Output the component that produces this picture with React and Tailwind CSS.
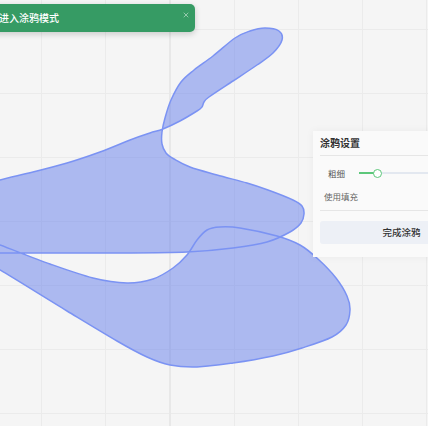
import { X } from 'lucide-react'

const SHAPE_A = [
  [-20, 186], [0, 180], [33, 172], [67, 163], [100, 152], [130, 140], [150, 133], [163, 129],
  [180, 121], [197, 111], [202, 107], [204, 102], [209, 97], [233, 81], [257, 65], [273, 53],
  [282, 40], [279, 31], [265, 28], [250, 31], [235, 38], [213, 56], [194, 70], [181, 82],
  [171, 100], [165, 118], [162, 132], [162, 144], [166, 153], [174, 159], [190, 167], [217, 175],
  [247, 183], [268, 190], [293, 200], [302, 206], [304, 214], [301, 223], [290, 232], [267, 242],
  [233, 248], [187, 252], [120, 253], [0, 253], [-20, 253],
]

const SHAPE_B = [
  [-20, 238], [0, 245], [50, 264], [93, 278], [127, 283], [153, 279], [173, 268], [187, 255],
  [197, 240], [207, 230], [220, 227], [240, 228], [277, 236], [300, 245], [318, 259], [336, 278],
  [347, 296], [350, 310], [346, 325], [332, 337], [302, 348], [273, 356], [233, 363], [197, 367],
  [170, 365], [147, 357], [117, 341], [67, 311], [0, 270], [-20, 260],
]

// catmull-rom through the points, closed
function smooth(pts) {
  const n = pts.length
  const p = (i) => pts[(i + n) % n]
  let d = `M${pts[0][0]},${pts[0][1]}`
  for (let i = 0; i < n; i++) {
    const p0 = p(i - 1), p1 = p(i), p2 = p(i + 1), p3 = p(i + 2)
    const c1 = [p1[0] + (p2[0] - p0[0]) / 6, p1[1] + (p2[1] - p0[1]) / 6]
    const c2 = [p2[0] - (p3[0] - p1[0]) / 6, p2[1] - (p3[1] - p1[1]) / 6]
    d += ` C${c1[0].toFixed(1)},${c1[1].toFixed(1)} ${c2[0].toFixed(1)},${c2[1].toFixed(1)} ${p2[0]},${p2[1]}`
  }
  return d + ' Z'
}

const V_LINES = [41, 105, 234, 298, 362, 426]
const H_LINES = [29, 93, 157, 221, 285, 349, 413]

function Canvas() {
  return (
    <svg width="428" height="426" viewBox="0 0 428 426" className="block">
      <rect width="428" height="426" fill="#f5f5f5" />
      {V_LINES.map((x) => (
        <line key={'v' + x} x1={x + 0.5} y1="0" x2={x + 0.5} y2="426" stroke="#ebebeb" />
      ))}
      {H_LINES.map((y) => (
        <line key={'h' + y} x1="0" y1={y + 0.5} x2="428" y2={y + 0.5} stroke="#ebebeb" />
      ))}
      <line x1="170" y1="0" x2="170" y2="426" stroke="#e8e8e8" strokeWidth="2" />
      <path
        d={smooth(SHAPE_A) + ' ' + smooth(SHAPE_B)}
        fill="rgb(92,120,235)"
        fillOpacity="0.48"
        stroke="#7b93f3"
        strokeWidth="1.5"
      />
    </svg>
  )
}

export default function App() {
  return (
    <div
      className="relative w-[428px] h-[426px] overflow-hidden bg-[#f5f5f5]"
      style={{ fontFamily: '"Noto Sans CJK SC", "Noto Sans", sans-serif' }}
    >
      <Canvas />

      <div className="absolute left-[-20px] top-[4px] w-[215px] h-[28px] rounded-[5px] bg-[#369b64] shadow-[0_2px_6px_rgba(0,0,0,0.18)] flex items-center pl-[19px]">
        <span className="text-[10px] font-medium text-white leading-none">进入涂鸦模式</span>
        <X className="absolute right-[5px] top-[7px] w-[8px] h-[8px] text-white/70" strokeWidth={2} />
      </div>

      <div className="absolute left-[313px] top-[131px] w-[180px] h-[126px] bg-[#fafafa] shadow-[0_0_8px_rgba(0,0,0,0.05)] px-[7px]">
        <div className="h-[25px] flex items-center border-b border-[#e6e6e6]">
          <span className="text-[10px] font-bold text-[#333] leading-none">涂鸦设置</span>
        </div>
        <div className="flex items-center h-[20px] mt-[7px]">
          <span className="w-[39px] pl-[8px] text-[8.5px] text-[#555] leading-none">粗细</span>
          <div className="relative flex-1 h-[2px] bg-[#e3e8f0]">
            <div className="absolute left-0 top-0 h-[2px] w-[17px] bg-[#5cc77a]" />
            <div className="absolute left-[14px] top-[-3.5px] w-[9px] h-[9px] rounded-full border-[1.5px] border-[#5cc77a] bg-white" />
          </div>
        </div>
        <div className="h-[28px] flex items-center pl-[4px] border-b border-[#e6e6e6]">
          <span className="text-[8.5px] text-[#666] leading-none">使用填充</span>
        </div>
        <button className="mt-[10px] w-[163px] h-[23px] rounded-[3px] bg-[#edf0f6] flex items-center justify-center">
          <span className="text-[9.5px] font-medium text-[#333] leading-none">完成涂鸦</span>
        </button>
      </div>
    </div>
  )
}
